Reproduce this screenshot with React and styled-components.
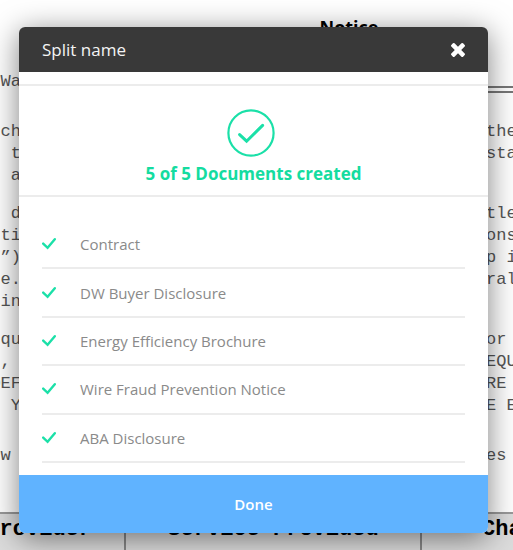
import React from "react";
import styled, { createGlobalStyle } from "styled-components";

const GlobalStyle = createGlobalStyle`
  * {
    box-sizing: border-box;
  }
  body {
    margin: 0;
    background: #fff;
    font-family: "Open Sans", "Noto Sans", sans-serif;
  }
`;

// document behind the dialog :
const Page = styled.main`
  position: relative;
  overflow: hidden;
  min-height: 100vh;
  display: flex;
  flex-direction: column;
`;
const Paper = styled.article`
  flex: 1;
  display: flex;
  flex-direction: column;
`;
const PaperTitle = styled.h1`
  margin: 0;
  padding: 15px 0 4px 185px;
  font-size: 18px;
  line-height: 24px;
  text-align: center;
`;
const Paragraph = styled.div`
  padding-top: ${props => (props.$wide ? "28px" : "16px")};
`;
const Line = styled.div`
  display: flex;
  justify-content: space-between;
  height: 22px;
  font-family: "Liberation Mono", monospace;
  font-size: 17px;
  line-height: 22px;
  color: #555;
  white-space: pre;
`;
const LineStart = styled.span`
  width: 21px;
  display: flex;
  justify-content: flex-end;
`;
const LineEnd = styled.span`
  width: 27px;
`;
const DoubleRule = styled.span`
  width: 40px;
  height: 7px;
  align-self: center;
  margin-top: 14px;
  border: solid #777;
  border-width: 2px 0;
`;
const Providers = styled.table`
  width: 100%;
  table-layout: fixed;
  border-collapse: collapse;
  background: #dcdcdc;
  border-top: 2px solid #999;
`;
const ProviderHead = styled.th`
  width: ${props => props.$width};
  height: 37px;
  padding: ${props => props.$padding || "0"};
  border-right: 2px solid #888;
  font-family: "Liberation Mono", monospace;
  font-size: 22px;
  line-height: 32px;
  text-align: ${props => props.$align || "center"};
  vertical-align: top;
  white-space: nowrap;
  direction: ${props => (props.$align === "right" ? "rtl" : "ltr")};

  &:last-child {
    border-right: 0;
  }
`;

// dialog :
const Overlay = styled.div`
  position: absolute;
  inset: 0;
  padding: 27px 25px 17px 19px;
`;
const Dialog = styled.section`
  height: 100%;
  display: flex;
  flex-direction: column;
  overflow: hidden;
  border-radius: 6px;
  background: #fff;
  box-shadow: 0 5px 30px rgba(0, 0, 0, 0.5);
`;
const DialogHeader = styled.header`
  display: flex;
  align-items: center;
  justify-content: space-between;
  height: 45px;
  padding: 0 23px;
  background: #393939;
  color: #f4f4f4;
`;
const DialogTitle = styled.h2`
  margin: 0;
  font-size: 17px;
  font-weight: 400;
  line-height: 24px;
`;
const CloseButton = styled.button`
  display: flex;
  padding: 0;
  border: 0;
  background: none;
  color: #fff;
  cursor: pointer;
`;
const Summary = styled.div`
  display: flex;
  flex-direction: column;
  align-items: center;
  margin-top: 12px;
  padding: 23px 0 9px;
  border: solid #ececec;
  border-width: 2px 0;
`;
const SummaryText = styled.p`
  margin: 5px 0 0;
  font-size: 17px;
  font-weight: 700;
  line-height: 24px;
  color: #14dca0;
`;
const DocumentList = styled.ul`
  flex: 1;
  display: flex;
  flex-direction: column;
  margin: 0;
  padding: 24px 23px 12px;
  list-style: none;
`;
const DocumentItem = styled.li`
  flex: 1;
  display: flex;
  align-items: center;
  gap: 24px;
  border-bottom: 2px solid #ececec;
  font-size: 15px;
  line-height: 20px;
  color: #8a8a8a;
`;
const DoneButton = styled.button`
  height: 58px;
  border: 0;
  background: #60b3ff;
  color: #fff;
  font-family: inherit;
  font-size: 15px;
  font-weight: 600;
  cursor: pointer;
`;

const CloseIcon = () => (
  <svg width="14" height="14" viewBox="302 366 1188 1188" fill="currentColor">
    <path d="M1490 1322q0 40-28 68l-136 136q-28 28-68 28t-68-28l-294-294-294 294q-28 28-68 28t-68-28l-136-136q-28-28-28-68t28-68l294-294-294-294q-28-28-28-68t28-68l136-136q28-28 68-28t68 28l294 294 294-294q28-28 68-28t68 28l136 136q28 28 28 68t-28 68l-294 294 294 294q28 28 28 68z" />
  </svg>
);

const CheckIcon = () => (
  <svg width="14" height="16" viewBox="0 0 14 16" fill="none">
    <path
      d="M1.2 7.6L5.6 11.8L12.8 3.2"
      stroke="#1be0a8"
      strokeWidth="2.4"
      strokeLinecap="round"
    />
  </svg>
);

const CheckCircle = () => (
  <svg width="54" height="48" viewBox="0 0 54 48" fill="none" stroke="#1be0a8">
    <circle cx="24" cy="24" r="22.6" strokeWidth="2.2" />
    <path
      d="M12.6 25.6L19.6 32.2L35.6 16.4"
      strokeWidth="3"
      strokeLinecap="round"
    />
  </svg>
);

// every line keeps only the words that stick out on both sides of the dialog
const paragraphs = [
  [["r ch", "the"], ["r t", "sta"], [". a", ""]],
  [["  d", "tle"], [" ti", "ons"], [" ”)", "p i"], [" e.", "ral"], [" in", ""]],
  [[" qu", "or"], ["s, ", "EQU"], ["DEF", "RE"], ["' Y", "E E"]]
];

const documents = [
  "Contract",
  "DW Buyer Disclosure",
  "Energy Efficiency Brochure",
  "Wire Fraud Prevention Notice",
  "ABA Disclosure"
];

const TextLine = ({ start, end }) => (
  <Line>
    <LineStart>{start}</LineStart>
    <LineEnd>{end}</LineEnd>
  </Line>
);

const App = () => (
  <Page>
    <GlobalStyle />
    <Paper>
      <PaperTitle>Notice</PaperTitle>
      <Paragraph $wide>
        <Line>
          <LineStart>Wa</LineStart>
          <DoubleRule />
        </Line>
      </Paragraph>
      <Paragraph $wide>
        {paragraphs[0].map(([start, end]) => (
          <TextLine key={start} start={start} end={end} />
        ))}
      </Paragraph>
      {paragraphs.slice(1).map((lines, i) => (
        <Paragraph key={i}>
          {lines.map(([start, end]) => (
            <TextLine key={start} start={start} end={end} />
          ))}
        </Paragraph>
      ))}
      <Paragraph $wide>
        <TextLine start=" w " end="es" />
      </Paragraph>
    </Paper>
    <Providers>
      <thead>
        <tr>
          <ProviderHead $width="125px" $align="right" $padding="0 32px 0 0">
            Provider
          </ProviderHead>
          <ProviderHead $width="296px">Service Provided</ProviderHead>
          <ProviderHead $align="left" $padding="0 0 0 60px">
            Cha
          </ProviderHead>
        </tr>
      </thead>
    </Providers>

    <Overlay>
      <Dialog role="dialog" aria-labelledby="split-title">
        <DialogHeader>
          <DialogTitle id="split-title">Split name</DialogTitle>
          <CloseButton type="button" aria-label="Close">
            <CloseIcon />
          </CloseButton>
        </DialogHeader>
        <Summary>
          <CheckCircle />
          <SummaryText>5 of 5 Documents created</SummaryText>
        </Summary>
        <DocumentList>
          {documents.map(name => (
            <DocumentItem key={name}>
              <CheckIcon />
              {name}
            </DocumentItem>
          ))}
        </DocumentList>
        <DoneButton type="button">Done</DoneButton>
      </Dialog>
    </Overlay>
  </Page>
);

export default App;
